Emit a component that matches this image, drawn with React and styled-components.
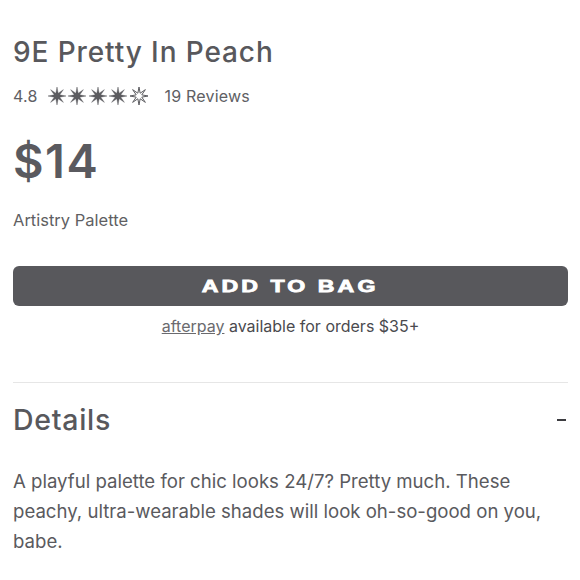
import React from 'react'
import styled, { createGlobalStyle } from 'styled-components'

const GlobalStyle = createGlobalStyle`
  body {
    margin: 0;
    background: #fff;
    font-family: Inter, "Liberation Sans", sans-serif;
    color: #58585c;
  }
`

const Page = styled.div`
  padding: 34px 12px 0 13px;
`

const Title = styled.h1`
  margin: 0;
  font-size: 28px;
  font-weight: 500;
  letter-spacing: 0.9px;
  line-height: 36px;
  color: #58585c;
`

const RatingRow = styled.div`
  display: flex;
  align-items: center;
  margin-top: 16px;
  font-size: 16px;
  letter-spacing: 0.2px;
  color: #606064;
`

const Stars = styled.div`
  display: flex;
  gap: 2.5px;
  margin: 0 17px 0 10px;
`

const Price = styled.div`
  margin-top: 30px;
  font-size: 47px;
  font-weight: 600;
  letter-spacing: 1.5px;
  line-height: 50px;
  color: #5a5a5f;
`

const Subtitle = styled.div`
  margin-top: 24px;
  font-size: 16.5px;
  color: #5f5f63;
`

const BagButton = styled.button`
  display: flex;
  align-items: center;
  justify-content: center;
  width: 100%;
  height: 40px;
  margin-top: 36px;
  border: none;
  border-radius: 6px;
  background: #58585c;
  color: #fff;
  cursor: pointer;
`

const BagLabel = styled.span`
  display: inline-block;
  font-family: "Liberation Sans", Arial, sans-serif;
  font-weight: 700;
  font-size: 16.5px;
  letter-spacing: 2.2px;
  -webkit-text-stroke: 0.8px #fff;
  transform: scaleX(1.4);
`

const Afterpay = styled.div`
  margin-top: 10px;
  text-align: center;
  font-size: 16px;
  color: #4a4a4e;
`

const AfterpayLink = styled.span`
  text-decoration: underline;
  color: #6a6a6e;
`

const Divider = styled.hr`
  margin: 46px 0 0;
  border: none;
  border-top: 1px solid #e6e6e6;
`

const DetailsHeader = styled.div`
  display: flex;
  justify-content: space-between;
  align-items: center;
  margin-top: 19px;
`

const DetailsTitle = styled.h2`
  margin: 0;
  font-size: 28.5px;
  font-weight: 500;
  letter-spacing: 0.7px;
  line-height: 36px;
  color: #58585c;
`

const Toggle = styled.span`
  width: 9px;
  height: 2px;
  margin-right: 2px;
  background: #3c3c40;
`

const Body = styled.p`
  margin: 28px 0 0;
  font-size: 18.6px;
  line-height: 30px;
  color: #5a5a5e;
`

const starPoints = (() => {
  const pts = []
  for (let i = 0; i < 16; i++) {
    const r = i % 2 === 0 ? 9 : 3
    const a = (Math.PI / 8) * i - Math.PI / 2
    pts.push(`${(9 + r * Math.cos(a)).toFixed(2)},${(9 + r * Math.sin(a)).toFixed(2)}`)
  }
  return pts.join(' ')
})()

const Star = ({ filled }) => (
  <svg width="18" height="18" viewBox="0 0 18 18">
    <polygon
      points={starPoints}
      fill={filled ? '#5c5c60' : '#fff'}
      stroke="#5c5c60"
      strokeWidth={filled ? 0.4 : 1}
      strokeLinejoin="round"
    />
  </svg>
)

const App = () => (
  <Page>
    <GlobalStyle />
    <Title>9E Pretty In Peach</Title>
    <RatingRow>
      4.8
      <Stars>
        {[true, true, true, true, false].map((f, i) => (
          <Star key={i} filled={f} />
        ))}
      </Stars>
      19 Reviews
    </RatingRow>
    <Price>$14</Price>
    <Subtitle>Artistry Palette</Subtitle>
    <BagButton>
      <BagLabel>ADD TO BAG</BagLabel>
    </BagButton>
    <Afterpay>
      <AfterpayLink>afterpay</AfterpayLink> available for orders $35+
    </Afterpay>
    <Divider />
    <DetailsHeader>
      <DetailsTitle>Details</DetailsTitle>
      <Toggle />
    </DetailsHeader>
    <Body>
      A playful palette for chic looks 24/7? Pretty much. These peachy, ultra-wearable shades
      will look oh-so-good on you, babe.
    </Body>
  </Page>
)

export default App
